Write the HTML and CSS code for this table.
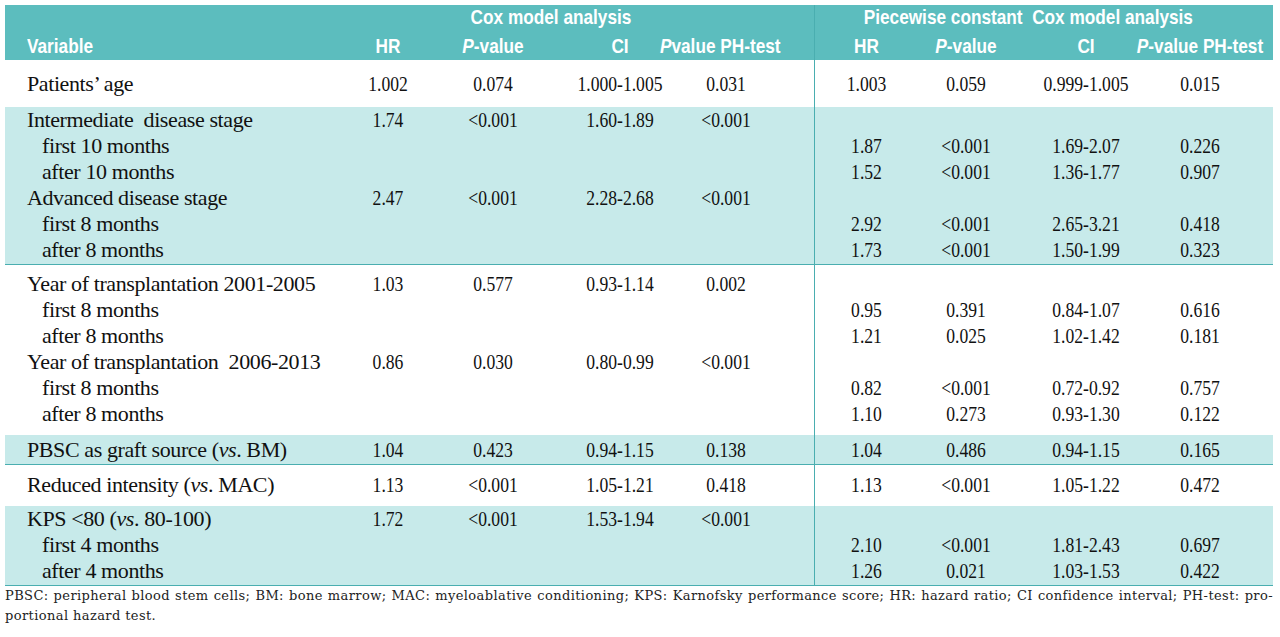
FILE: index.html
```html
<!DOCTYPE html>
<html lang="en">
<head>
<meta charset="utf-8">
<title>Cox model analysis</title>
<link rel="stylesheet" href="styles.css">
</head>
<body>
<div class="table">
  <div class="thead blk">
    <div class="hrow top">
      <div class="grp cox">Cox model analysis</div>
      <div class="grp pw">Piecewise constant&nbsp; Cox model analysis</div>
    </div>
    <div class="hrow">
      <div class="hv">Variable</div>
      <div class="hc">HR</div>
      <div class="hc"><i>P</i>-value</div>
      <div class="hc">CI</div>
      <div class="hc ph"><i>P</i>value PH-test</div>
      <div></div>
      <div class="hc">HR</div>
      <div class="hc"><i>P</i>-value</div>
      <div class="hc">CI</div>
      <div class="hc"><i>P</i>-value PH-test</div>
    </div>
  </div>

  <div class="blk b1">
    <div class="row"><div class="v">Patients’ age</div><div class="c">1.002</div><div class="c">0.074</div><div class="c">1.000-1.005</div><div class="c">0.031</div><div></div><div class="c">1.003</div><div class="c">0.059</div><div class="c">0.999-1.005</div><div class="c">0.015</div></div>
  </div>

  <div class="blk tint b2">
    <div class="row"><div class="v">Intermediate  disease stage</div><div class="c">1.74</div><div class="c">&lt;0.001</div><div class="c">1.60-1.89</div><div class="c">&lt;0.001</div></div>
    <div class="row"><div class="v sub">first 10 months</div><div></div><div></div><div></div><div></div><div></div><div class="c">1.87</div><div class="c">&lt;0.001</div><div class="c">1.69-2.07</div><div class="c">0.226</div></div>
    <div class="row"><div class="v sub">after 10 months</div><div></div><div></div><div></div><div></div><div></div><div class="c">1.52</div><div class="c">&lt;0.001</div><div class="c">1.36-1.77</div><div class="c">0.907</div></div>
    <div class="row"><div class="v">Advanced disease stage</div><div class="c">2.47</div><div class="c">&lt;0.001</div><div class="c">2.28-2.68</div><div class="c">&lt;0.001</div></div>
    <div class="row"><div class="v sub">first 8 months</div><div></div><div></div><div></div><div></div><div></div><div class="c">2.92</div><div class="c">&lt;0.001</div><div class="c">2.65-3.21</div><div class="c">0.418</div></div>
    <div class="row"><div class="v sub">after 8 months</div><div></div><div></div><div></div><div></div><div></div><div class="c">1.73</div><div class="c">&lt;0.001</div><div class="c">1.50-1.99</div><div class="c">0.323</div></div>
  </div>

  <div class="blk b3">
    <div class="row"><div class="v">Year of transplantation 2001-2005</div><div class="c">1.03</div><div class="c">0.577</div><div class="c">0.93-1.14</div><div class="c">0.002</div></div>
    <div class="row"><div class="v sub">first 8 months</div><div></div><div></div><div></div><div></div><div></div><div class="c">0.95</div><div class="c">0.391</div><div class="c">0.84-1.07</div><div class="c">0.616</div></div>
    <div class="row"><div class="v sub">after 8 months</div><div></div><div></div><div></div><div></div><div></div><div class="c">1.21</div><div class="c">0.025</div><div class="c">1.02-1.42</div><div class="c">0.181</div></div>
    <div class="row"><div class="v">Year of transplantation  2006-2013</div><div class="c">0.86</div><div class="c">0.030</div><div class="c">0.80-0.99</div><div class="c">&lt;0.001</div></div>
    <div class="row"><div class="v sub">first 8 months</div><div></div><div></div><div></div><div></div><div></div><div class="c">0.82</div><div class="c">&lt;0.001</div><div class="c">0.72-0.92</div><div class="c">0.757</div></div>
    <div class="row"><div class="v sub">after 8 months</div><div></div><div></div><div></div><div></div><div></div><div class="c">1.10</div><div class="c">0.273</div><div class="c">0.93-1.30</div><div class="c">0.122</div></div>
  </div>

  <div class="blk tint b4">
    <div class="row"><div class="v">PBSC as graft source (<i>vs</i>. BM)</div><div class="c">1.04</div><div class="c">0.423</div><div class="c">0.94-1.15</div><div class="c">0.138</div><div></div><div class="c">1.04</div><div class="c">0.486</div><div class="c">0.94-1.15</div><div class="c">0.165</div></div>
  </div>

  <div class="blk b5">
    <div class="row"><div class="v">Reduced intensity (<i>vs</i>. MAC)</div><div class="c">1.13</div><div class="c">&lt;0.001</div><div class="c">1.05-1.21</div><div class="c">0.418</div><div></div><div class="c">1.13</div><div class="c">&lt;0.001</div><div class="c">1.05-1.22</div><div class="c">0.472</div></div>
  </div>

  <div class="blk tint b6">
    <div class="row"><div class="v">KPS &lt;80 (<i>vs</i>. 80-100)</div><div class="c">1.72</div><div class="c">&lt;0.001</div><div class="c">1.53-1.94</div><div class="c">&lt;0.001</div></div>
    <div class="row"><div class="v sub">first 4 months</div><div></div><div></div><div></div><div></div><div></div><div class="c">2.10</div><div class="c">&lt;0.001</div><div class="c">1.81-2.43</div><div class="c">0.697</div></div>
    <div class="row"><div class="v sub">after 4 months</div><div></div><div></div><div></div><div></div><div></div><div class="c">1.26</div><div class="c">0.021</div><div class="c">1.03-1.53</div><div class="c">0.422</div></div>
  </div>

  <div class="foot">
    <div class="l1">PBSC: peripheral blood stem cells; BM: bone marrow; MAC: myeloablative conditioning; KPS: Karnofsky performance score; HR: hazard ratio; CI confidence interval; PH-test: pro-</div>
    <div>portional hazard test.</div>
  </div>
</div>
</body>
</html>
```

FILE: styles.css
```css
html, body {
  margin: 0;
  padding: 0;
  background: #ffffff;
}

.table {
  width: 1268px;
  padding: 5px 0 0 5px;
  color: #111111;
  font-family: "Liberation Serif", "Times New Roman", serif;
}

.blk {
  background-image: linear-gradient(#4aaeb0, #4aaeb0);
  background-size: 1px 100%;
  background-position: 809px 0;
  background-repeat: no-repeat;
}

.thead {
  background-color: #5cbdbe;
  color: #ffffff;
  font-family: "Liberation Sans", Arial, sans-serif;
  font-weight: bold;
  font-size: 21px;
}

.hrow,
.row {
  display: grid;
  grid-template-columns: 335px 96px 114px 140px 72px 52px 105px 94px 146px 82px 32px;
}

.hrow {
  height: 28px;
  line-height: 28px;
  white-space: nowrap;
}

.hrow.top {
  height: 27px;
  line-height: 24px;
}

.grp {
  display: flex;
  justify-content: center;
  transform: scaleX(0.82);
}

.grp.cox { grid-column: 2 / 6; }
.grp.pw { grid-column: 7 / 11; padding-left: 2px; }

.hv {
  padding-left: 22px;
  transform: scaleX(0.82);
  transform-origin: 22px 50%;
}

.hc {
  display: flex;
  justify-content: center;
  transform: scaleX(0.82);
}

.hc.ph {
  padding-right: 14px;
}

.row {
  height: 26px;
  line-height: 26px;
  font-size: 22px;
}

.v {
  padding-left: 22px;
  white-space: pre;
  letter-spacing: -0.4px;
}

.v.sub {
  padding-left: 37px;
}

.c {
  text-align: center;
  white-space: nowrap;
  transform: scaleX(0.8);
}

.tint {
  background-color: #c7eaea;
}

.b1 { padding: 11px 0 10px; }
.b2 { padding: 0 0 1px; border-bottom: 1px solid #4aaeb0; }
.b3 { padding: 6px 0 8px; }
.b4 { padding: 2px 0 1px; border-bottom: 1px solid #4aaeb0; }
.b5 { padding: 7px 0 8px; }
.b6 { padding: 0 0 1px; border-bottom: 1px solid #4aaeb0; }

.foot {
  font-family: "DejaVu Serif", serif;
  font-size: 13px;
  line-height: 20px;
  color: #222222;
  letter-spacing: 0.4px;
}

.foot .l1 {
  white-space: nowrap;
  text-align: justify;
  text-align-last: justify;
}
```
